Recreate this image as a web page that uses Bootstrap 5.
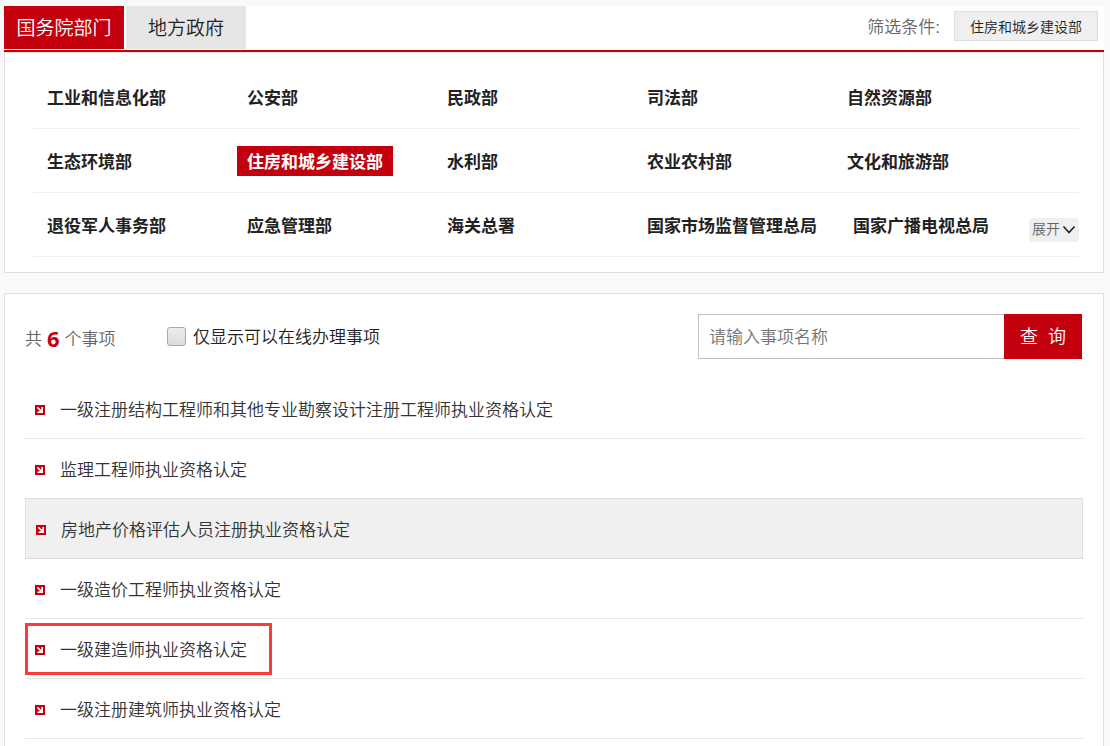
<!DOCTYPE html>
<html lang="zh-CN">
<head>
<meta charset="utf-8">
<meta name="viewport" content="width=device-width, initial-scale=1">
<title>国务院部门</title>
<link href="https://cdn.jsdelivr.net/npm/bootstrap@5.3.0/dist/css/bootstrap.min.css" rel="stylesheet">
<style>
:root { --gov-red: #c4000f; --edge: #dedede; --ink: #222; }
body { background: #f9f9f9; color: var(--ink); font-family: "Liberation Sans", "Noto Sans CJK SC", sans-serif; font-size: 17px; font-weight: 350; line-height: 24px; }
a, a:hover { color: inherit; text-decoration: none; }
.page { padding: 6px 6px 0 4px; min-height: 100vh; }
.topbar { border-bottom: 2px solid var(--gov-red); height: 46px; gap: 2px; }
.tab { width: 120px; height: 43px; font-size: 19px; background: #e6e6e6; border: 0; border-radius: 0; padding: 4px 0 0; font-weight: inherit; color: var(--ink); }
.tab.active { background: var(--gov-red); color: #fff; }
.filter-label { color: #666; margin-right: 14px; }
.filter-value { width: 144px; height: 30px; font-size: 14px; background: #efefef; border: 1px solid var(--edge); border-radius: 0; padding: 2px 0 0; margin-right: 6px; font-weight: inherit; color: var(--ink); }
.panel { background: #fff; border: 1px solid var(--edge); }
.departments { padding: 12px 24px 15px 28px; border-top-color: #e6e6e6; }
.dept-row { min-height: 64px; border-bottom: 1px solid #efefef; }
.dept { min-width: 200px; padding: 0 12px 0 4px; }
.dept:last-of-type { min-width: 0; padding-right: 0; }
.dept a { display: block; width: fit-content; font-weight: 700; line-height: 26px; padding: 4px 10px 0; }
.dept a.chosen { background: var(--gov-red); color: #fff; }
.expand { width: 50px; height: 24px; margin-top: 10px; font-size: 14px; background: #efefef; color: #666; border: 0; border-radius: 4px; padding: 0 3px; font-weight: inherit; }
.results { margin-top: 20px; padding: 20px 20px 0; }
.total { color: #666; width: 142px; padding-top: 6px; }
.total strong { font-family: "Noto Sans", sans-serif; font-weight: 700; color: var(--gov-red); font-size: 22px; line-height: 20px; margin: 0 5px 4px; }
.only-online { appearance: none; width: 19px; height: 19px; border: 1px solid #aaa; border-radius: 3px; background: linear-gradient(#ededed, #dcdcdc); margin: 0 7px 0 0; }
.only-online:checked { background: var(--gov-red); }
.only-online + label { padding-top: 2px; }
.search { width: 384px; margin-right: 1px; }
.search input, .search button { height: 45px; font-size: 17px; border-radius: 0; font-weight: inherit; }
.search input { border: 1px solid #c1c1c1; border-right: 0; padding: 2px 10px 0; }
.search input::placeholder { color: #757575; }
.search button { width: 78px; background: var(--gov-red); color: #fff; padding: 2px 0 0; border: 0; font-size: 18px; }
.items { margin-top: 20px; }
.item { height: 60px; border-bottom: 1px solid #e6e6e6; }
.item a { display: flex; align-items: center; gap: 15px; height: 59px; padding: 2px 10px 0; color: #333; }
.item span { padding-top: 2px; }
.item.current { height: 61px; margin-top: -1px; background: #f0f0f0; border: 1px solid var(--edge); }
.item.marked a { border: 3px solid #fb3b3b; width: 247px; height: 52px; padding: 2px 7px 0; }
.item svg { flex: none; }
</style>
</head>
<body>
<svg class="d-none"><symbol id="arrow" viewBox="0 0 10 10"><path fill="#c4000f" d="M0 0h10v10H0z"/><path fill="none" stroke="#fff" stroke-width="1.6" d="M2.3 2.3l4 4M7.2 2v5.200H2.500"/><path fill="#fff" d="M7.500 3.500v4H3.500z"/></symbol></svg>
<div class="page d-flex flex-column">
  <nav class="topbar bg-white d-flex align-items-start">
    <button type="button" class="btn tab active">国务院部门</button>
    <button type="button" class="btn tab">地方政府</button>
    <div class="ms-auto d-flex align-items-center h-100">
      <span class="filter-label">筛选条件:</span>
      <button type="button" class="btn filter-value mb-1">住房和城乡建设部</button>
    </div>
  </nav>

  <section class="panel departments">
    <div class="dept-row d-flex align-items-center">
      <div class="dept"><a href="#">工业和信息化部</a></div>
      <div class="dept"><a href="#">公安部</a></div>
      <div class="dept"><a href="#">民政部</a></div>
      <div class="dept"><a href="#">司法部</a></div>
      <div class="dept"><a href="#">自然资源部</a></div>
    </div>
    <div class="dept-row d-flex align-items-center">
      <div class="dept"><a href="#">生态环境部</a></div>
      <div class="dept"><a href="#" class="chosen">住房和城乡建设部</a></div>
      <div class="dept"><a href="#">水利部</a></div>
      <div class="dept"><a href="#">农业农村部</a></div>
      <div class="dept"><a href="#">文化和旅游部</a></div>
    </div>
    <div class="dept-row d-flex align-items-center">
      <div class="dept"><a href="#">退役军人事务部</a></div>
      <div class="dept"><a href="#">应急管理部</a></div>
      <div class="dept"><a href="#">海关总署</a></div>
      <div class="dept"><a href="#">国家市场监督管理总局</a></div>
      <div class="dept"><a href="#">国家广播电视总局</a></div>
      <button type="button" class="btn expand ms-auto d-flex align-items-center justify-content-between">展开<svg width="14" height="10" viewBox="0 0 14 10"><path d="M1.500 1.500L7 7.500l5.500-6" fill="none" stroke="#222" stroke-width="1.600"/></svg></button>
    </div>
  </section>

  <section class="panel results border-bottom-0 flex-grow-1">
    <div class="d-flex align-items-center">
      <div class="total d-flex align-items-center">共<strong>6</strong>个事项</div>
      <div class="d-flex align-items-center">
        <input class="only-online" type="checkbox" id="online">
        <label for="online">仅显示可以在线办理事项</label>
      </div>
      <form class="search d-flex ms-auto">
        <input class="form-control" type="text" placeholder="请输入事项名称" aria-label="请输入事项名称">
        <button type="button" class="btn flex-shrink-0">查&nbsp; 询</button>
      </form>
    </div>
    <ul class="items list-unstyled mb-0">
      <li class="item"><a href="#"><svg width="10" height="10"><use href="#arrow"/></svg><span>一级注册结构工程师和其他专业勘察设计注册工程师执业资格认定</span></a></li>
      <li class="item"><a href="#"><svg width="10" height="10"><use href="#arrow"/></svg><span>监理工程师执业资格认定</span></a></li>
      <li class="item current"><a href="#"><svg width="10" height="10"><use href="#arrow"/></svg><span>房地产价格评估人员注册执业资格认定</span></a></li>
      <li class="item"><a href="#"><svg width="10" height="10"><use href="#arrow"/></svg><span>一级造价工程师执业资格认定</span></a></li>
      <li class="item marked pt-1"><a href="#"><svg width="10" height="10"><use href="#arrow"/></svg><span>一级建造师执业资格认定</span></a></li>
      <li class="item"><a href="#"><svg width="10" height="10"><use href="#arrow"/></svg><span>一级注册建筑师执业资格认定</span></a></li>
    </ul>
  </section>
</div>
<script src="https://cdn.jsdelivr.net/npm/bootstrap@5.3.0/dist/js/bootstrap.bundle.min.js"></script>
</body>
</html>
